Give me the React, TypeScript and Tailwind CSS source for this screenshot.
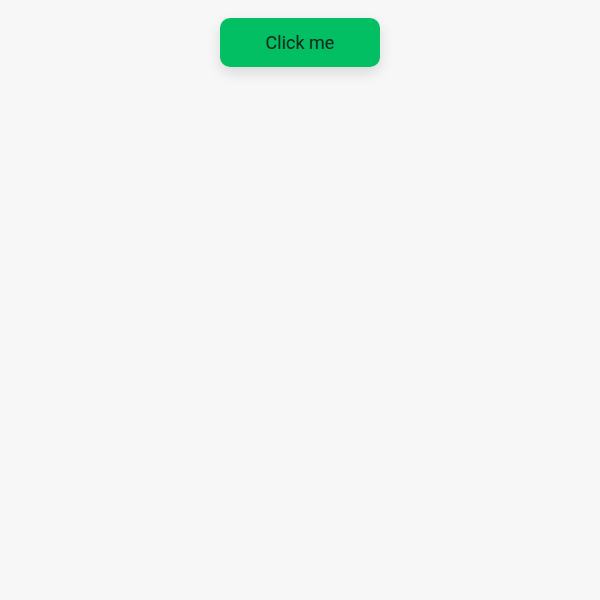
import React from 'react';

export default function App() {
  return (
    <div className="min-h-screen bg-[#f7f7f7] flex justify-center pt-[18px]" style={{ fontFamily: 'Roboto, "Noto Sans", sans-serif' }}>
      <div>
        <button className="w-[160px] h-[49px] rounded-[10px] bg-[#02bf63] text-[#112a1c] text-[18px] shadow-[0_6px_14px_rgba(0,0,0,0.12)]">
          Click me
        </button>
      </div>
    </div>
  );
}
